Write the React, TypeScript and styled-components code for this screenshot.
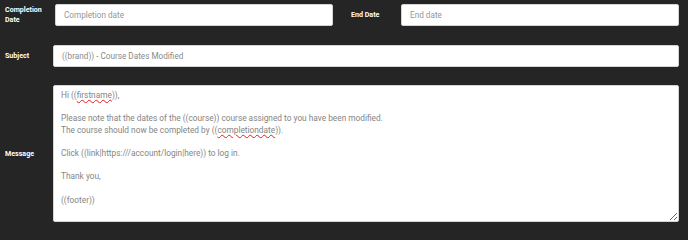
import { createGlobalStyle, styled } from "styled-components"

const GlobalStyle = createGlobalStyle`
  html, body {
    margin: 0;
    padding: 0;
    background: #252525;
    font-family: Roboto, "Liberation Sans", sans-serif;
  }
`

type LabelPropsType = {
    width: number
}

const Form = styled.div`
  display: flex;
  flex-direction: column;
  gap: 18.5px;
  padding: 4px 9px 0 5px;
  width: 688px;
  box-sizing: border-box;
`

const Row = styled.div`
  display: flex;
  align-items: center;
  gap: 18px;
`

const Group = styled.div`
  display: flex;
  align-items: center;
  flex: 1;
  min-width: 0;
`

const Label = styled.div<LabelPropsType>`
  width: ${props => props.width}px;
  flex-shrink: 0;
  color: #ffffff;
  font-weight: 700;
  font-size: 7.1px;
  line-height: 10px;
`

const Input = styled.input`
  flex: 1;
  min-width: 0;
  height: 22px;
  box-sizing: border-box;
  border: 1px solid #d4d4d4;
  border-radius: 2px;
  background: #ffffff;
  padding: 0 8px;
  font-family: Roboto, "Liberation Sans", sans-serif;
  font-size: 8.2px;
  color: #8a8a8a;
  outline: none;

  &::placeholder {
    color: #959595;
  }
`

const MessageBox = styled.div`
  flex: 1;
  height: 137px;
  box-sizing: border-box;
  border: 1px solid #d4d4d4;
  border-radius: 2px;
  background: #ffffff;
  padding: 3.5px 7px;
  font-size: 8.3px;
  line-height: 11.7px;
  color: #858585;
  overflow: auto;
  resize: vertical;
  white-space: pre-wrap;
`

const Misspelled = styled.span`
  text-decoration: underline wavy #e0201a;
  text-decoration-thickness: 1px;
  text-underline-offset: 1px;
`

export default function App() {
    return (
        <>
            <GlobalStyle />
            <Form>
                <Row>
                    <Group>
                        <Label width={50}>Completion<br />Date</Label>
                        <Input placeholder="Completion date" />
                    </Group>
                    <Group>
                        <Label width={50}>End Date</Label>
                        <Input placeholder="End date" />
                    </Group>
                </Row>
                <Row>
                    <Group>
                        <Label width={48}>Subject</Label>
                        <Input defaultValue="((brand)) - Course Dates Modified" />
                    </Group>
                </Row>
                <Row>
                    <Group>
                        <Label width={48}>Message</Label>
                        <MessageBox>
                            Hi ((<Misspelled>firstname</Misspelled>)),{"\n\n"}
                            Please note that the dates of the ((course)) course assigned to you have been modified.{"\n"}
                            The course should now be completed by ((<Misspelled>completiondate</Misspelled>)).{"\n\n"}
                            Click ((link|https:///account/login|here)) to log in.{"\n\n"}
                            Thank you,{"\n\n"}
                            ((footer))
                        </MessageBox>
                    </Group>
                </Row>
            </Form>
        </>
    )
}
